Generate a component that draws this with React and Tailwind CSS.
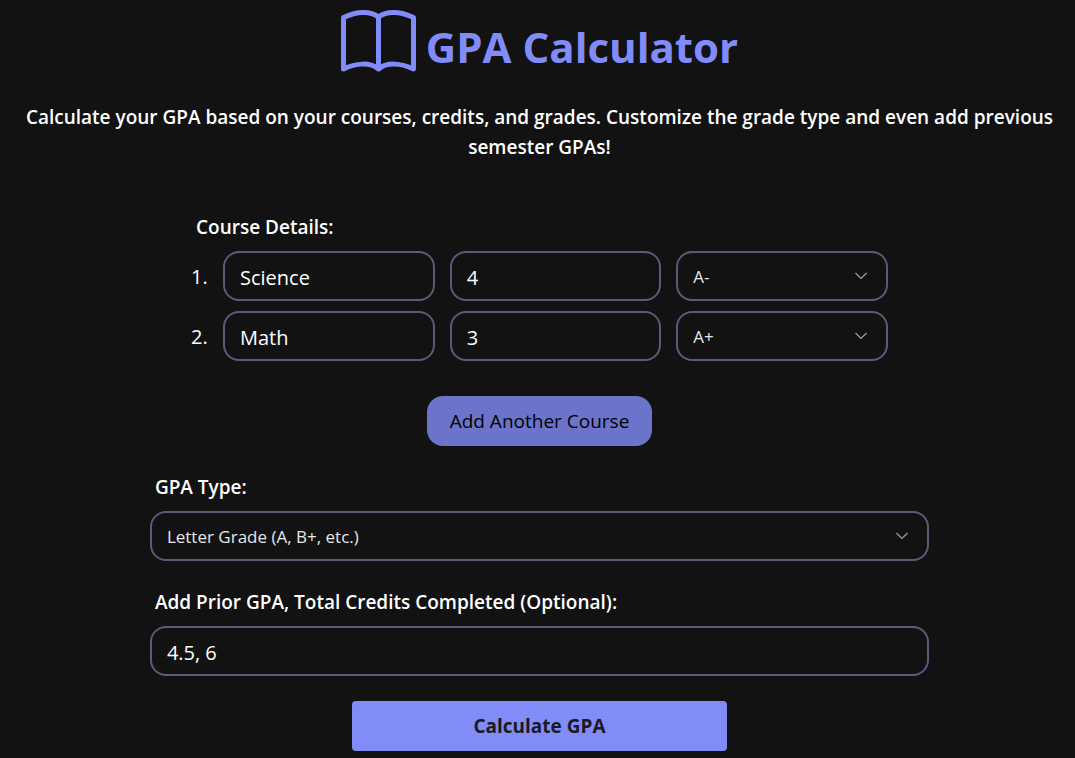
import { useState } from "react";

const letterGrades = ["A+", "A", "A-", "B+", "B", "B-", "C+", "C", "C-", "D", "F"];

const fieldStyles =
  "block w-full h-[50px] rounded-2xl border-2 border-[#5f587d] bg-[#121212] px-[15px] pt-[2px]";

const BookIcon = () => (
  <svg
    width="75"
    height="66"
    viewBox="0 0 75 66"
    fill="none"
    stroke="currentColor"
    strokeWidth="5"
    strokeLinecap="round"
    strokeLinejoin="round"
    aria-hidden="true"
  >
    <path d="M37.5 9C29.5 3 16.5 3 2.5 9.5V61C14.5 55 29.5 54 37.5 61C45.5 54 60.5 55 72.5 61V9.5C58.5 3 45.5 3 37.5 9V61" />
  </svg>
);

const Select = ({ children, ...props }) => (
  <div className="relative">
    <select
      className={`${fieldStyles} appearance-none text-[17px] text-gray-200`}
      {...props}
    >
      {children}
    </select>
    <svg
      className="pointer-events-none absolute right-5 top-[21px] text-[#a09fa6]"
      width="14"
      height="8"
      viewBox="0 0 14 8"
      fill="none"
      stroke="currentColor"
      strokeWidth="1.2"
      aria-hidden="true"
    >
      <path d="M1.5 1L7 6.5L12.5 1" />
    </svg>
  </div>
);

const App = () => {
  const [courses, setCourses] = useState([
    { name: "Science", credits: "4", grade: "A-" },
    { name: "Math", credits: "3", grade: "A+" },
  ]);
  const [gpaType, setGpaType] = useState("letter");
  const [prior, setPrior] = useState("4.5, 6");

  function updateCourse(index, field, value) {
    setCourses(
      courses.map((course, i) =>
        i === index ? { ...course, [field]: value } : course
      )
    );
  }

  function addCourse() {
    setCourses([...courses, { name: "", credits: "", grade: "A" }]);
  }

  return (
    <div className="min-h-screen bg-[#121212] pl-5 pr-4 pt-2 pb-[7px] font-['Open_Sans',sans-serif] text-[20px] leading-[30px] text-white">
      <header className="text-center">
        <h1 className="flex items-start justify-center gap-[10px] text-[42px] leading-[78px] font-bold text-[#818cf8]">
          <BookIcon />
          GPA Calculator
        </h1>
        <p className="mt-4 text-[19px] font-semibold">
          Calculate your GPA based on your courses, credits, and grades.
          Customize the grade type and even add previous semester GPAs!
        </p>
      </header>

      <form
        className="mx-auto mt-[50px] flex w-3/4 flex-col items-center"
        onSubmit={(e) => e.preventDefault()}
      >
        <fieldset className="w-full max-w-[697px]">
          <legend className="mb-[9px] ml-[5px] text-[19px] font-semibold">
            Course Details:
          </legend>
          <ol className="flex flex-col gap-[10px]">
            {courses.map((course, index) => (
              <li
                key={index}
                className="grid grid-cols-[17px_1fr_1fr_1fr] items-center gap-[15px]"
              >
                <span className="pt-[2px]">{index + 1}.</span>
                <input
                  type="text"
                  aria-label="Course name"
                  className={fieldStyles}
                  value={course.name}
                  onChange={(e) => updateCourse(index, "name", e.target.value)}
                />
                <input
                  type="text"
                  inputMode="decimal"
                  aria-label="Credits"
                  className={fieldStyles}
                  value={course.credits}
                  onChange={(e) => updateCourse(index, "credits", e.target.value)}
                />
                <Select
                  aria-label="Grade"
                  value={course.grade}
                  onChange={(e) => updateCourse(index, "grade", e.target.value)}
                >
                  {letterGrades.map((grade) => (
                    <option key={grade}>{grade}</option>
                  ))}
                </Select>
              </li>
            ))}
          </ol>
        </fieldset>

        <button
          type="button"
          onClick={addCourse}
          className="mt-[35px] h-[50px] min-w-[225px] cursor-pointer rounded-2xl bg-[#6b74ca] px-5 text-[19px] font-medium text-black"
        >
          Add Another Course
        </button>

        <div className="mt-[26px] w-full">
          <label
            htmlFor="gpa-type"
            className="mb-[9px] ml-[5px] block text-[19px] font-semibold"
          >
            GPA Type:
          </label>
          <Select
            id="gpa-type"
            value={gpaType}
            onChange={(e) => setGpaType(e.target.value)}
          >
            <option value="letter">Letter Grade (A, B+, etc.)</option>
            <option value="percentage">Percentage</option>
          </Select>
        </div>

        <div className="mt-[26px] w-full">
          <label
            htmlFor="prior-gpa"
            className="mb-[9px] ml-[5px] block text-[19px] font-semibold"
          >
            Add Prior GPA, Total Credits Completed (Optional):
          </label>
          <input
            id="prior-gpa"
            type="text"
            className={fieldStyles}
            value={prior}
            onChange={(e) => setPrior(e.target.value)}
          />
        </div>

        <button
          type="submit"
          className="mt-[25px] h-[50px] w-full max-w-[375px] cursor-pointer rounded bg-[#818cf8] text-[19px] font-bold text-[#1a1a24]"
        >
          Calculate GPA
        </button>
      </form>
    </div>
  );
};

export default App;
